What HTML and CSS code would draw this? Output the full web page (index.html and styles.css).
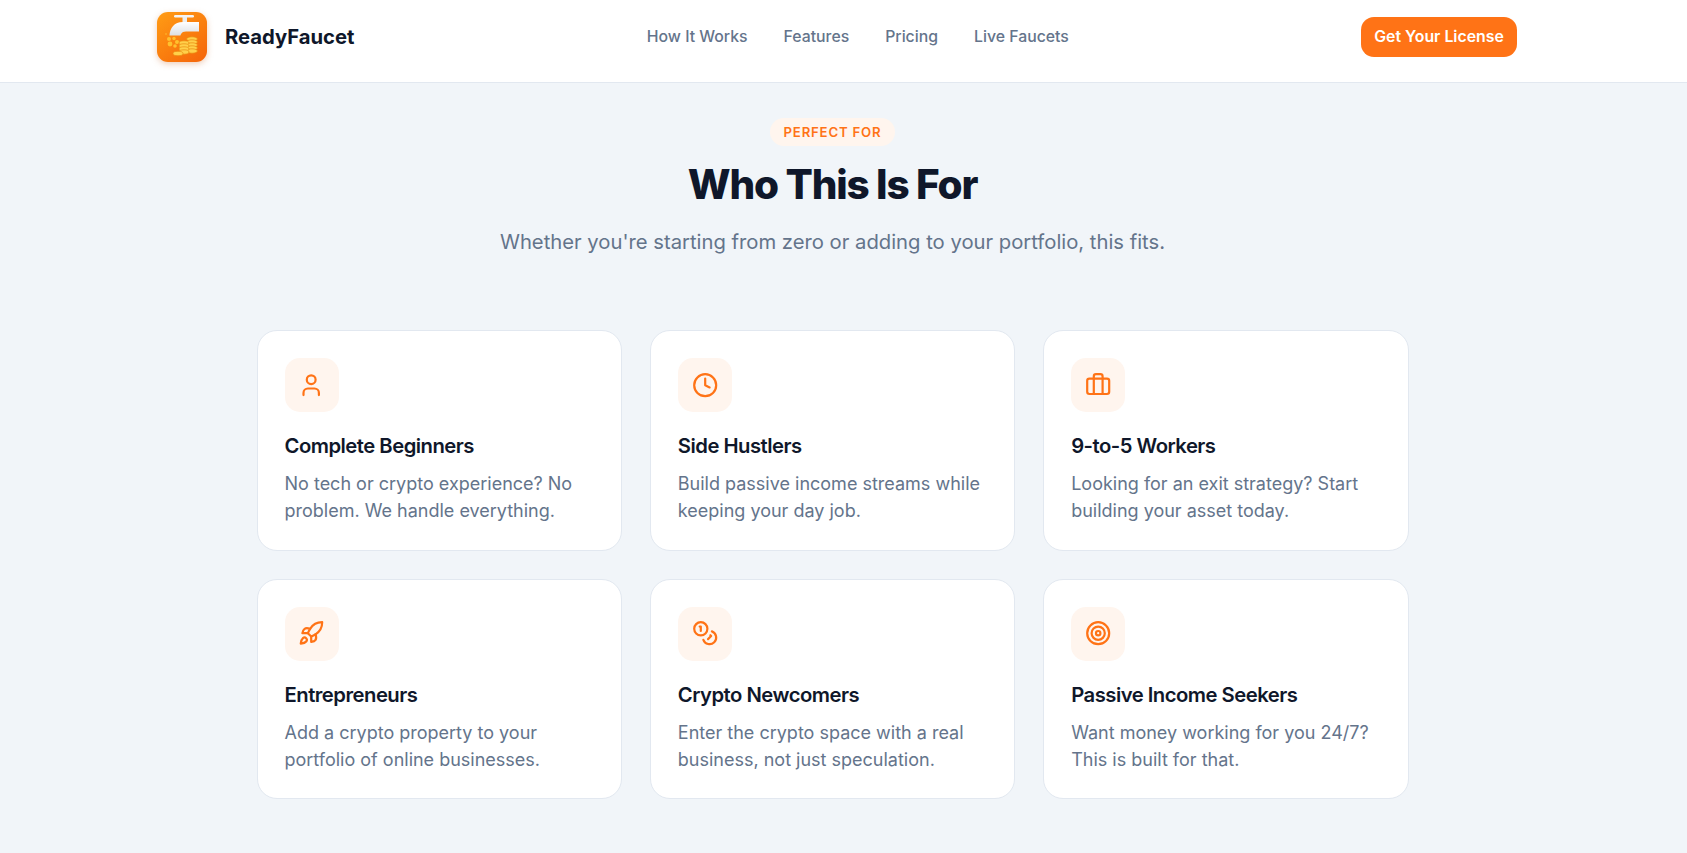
FILE: index.html
```html
<!DOCTYPE html>
<html lang="en">
<head>
<meta charset="utf-8">
<title>ReadyFaucet</title>
<link rel="stylesheet" href="styles.css">
</head>
<body>
<header class="nav">
  <div class="nav-inner">
    <a class="brand" href="#">
      <svg class="logo" viewBox="0 0 50 50" aria-hidden="true">
        <defs>
          <linearGradient id="lg" x1="0.1" y1="0" x2="0.9" y2="1"><stop offset="0" stop-color="#ff9a14"/><stop offset="1" stop-color="#f5660a"/></linearGradient>
          <linearGradient id="tap" x1="0" y1="0" x2="0" y2="1"><stop offset="0" stop-color="#ffffff"/><stop offset="1" stop-color="#dcdfe3"/></linearGradient>
        </defs>
        <rect width="50" height="50" rx="11" fill="url(#lg)"/>
        <rect x="17" y="3" width="20" height="2.600" rx="1.300" fill="#f4f4f4"/>
        <rect x="25.500" y="5" width="4.500" height="5" fill="#eceef0"/>
        <path d="M42 10v9.500H29c-2.500 0-4 .8-5 2.500l-.6 1.500H12.500C13 16 17 10 26 10z" fill="url(#tap)"/>
        <g fill="#ffc02e">
          <circle cx="12" cy="27" r="2"/><circle cx="17" cy="26.500" r="1.700"/><circle cx="20" cy="30" r="2"/><circle cx="13" cy="32" r="2.400"/><circle cx="18" cy="34" r="1.800"/><circle cx="9" cy="22" r=".8"/>
        </g>
        <g fill="#ffd04a" stroke="#e98a10" stroke-width=".7">
          <ellipse cx="35" cy="27" rx="5.500" ry="2.200"/><ellipse cx="35" cy="30" rx="5.500" ry="2.200"/><ellipse cx="35" cy="33" rx="5.500" ry="2.200"/><ellipse cx="35" cy="36" rx="5.500" ry="2.200"/><ellipse cx="35" cy="39" rx="5.500" ry="2.200"/>
          <ellipse cx="27" cy="31" rx="5" ry="2.200"/><ellipse cx="27" cy="34" rx="5" ry="2.200"/><ellipse cx="27" cy="37" rx="5" ry="2.200"/><ellipse cx="27" cy="40" rx="5" ry="2.200"/>
          <ellipse cx="21" cy="41.500" rx="5" ry="2.200"/>
        </g>
      </svg>
      <span class="brand-name">ReadyFaucet</span>
    </a>
    <nav class="links">
      <a href="#">How It Works</a>
      <a href="#">Features</a>
      <a href="#">Pricing</a>
      <a href="#">Live Faucets</a>
    </nav>
    <a class="cta" href="#">Get Your License</a>
  </div>
</header>
<main class="section">
  <div class="head">
    <span class="pill">PERFECT FOR</span>
    <h1>Who This Is For</h1>
    <p>Whether you're starting from zero or adding to your portfolio, this fits.</p>
  </div>
  <div class="grid">
    <article class="card">
      <div class="icon"><svg viewBox="0 0 24 24"><path d="M19 21v-2a4 4 0 0 0-4-4H9a4 4 0 0 0-4 4v2"/><circle cx="12" cy="7" r="4"/></svg></div>
      <h3>Complete Beginners</h3>
      <p>No tech or crypto experience? No problem. We handle everything.</p>
    </article>
    <article class="card">
      <div class="icon"><svg viewBox="0 0 24 24"><circle cx="12" cy="12" r="10"/><path d="M12 6v6l4 2"/></svg></div>
      <h3>Side Hustlers</h3>
      <p>Build passive income streams while keeping your day job.</p>
    </article>
    <article class="card">
      <div class="icon"><svg viewBox="0 0 24 24"><rect x="2" y="6" width="20" height="14" rx="2"/><path d="M16 20V4a2 2 0 0 0-2-2h-4a2 2 0 0 0-2 2v16"/></svg></div>
      <h3>9-to-5 Workers</h3>
      <p>Looking for an exit strategy? Start building your asset today.</p>
    </article>
    <article class="card">
      <div class="icon"><svg viewBox="0 0 24 24"><path d="M4.500 16.500c-1.500 1.260-2 5-2 5s3.740-.5 5-2c.71-.84.7-2.130-.09-2.910a2.180 2.180 0 0 0-2.910-.09z"/><path d="m12 15-3-3a22 22 0 0 1 2-3.950A12.880 12.880 0 0 1 22 2c0 2.720-.78 7.500-6 11a22.350 22.350 0 0 1-4 2z"/><path d="M9 12H4s.55-3.030 2-4c1.620-1.080 5 0 5 0"/><path d="M12 15v5s3.030-.55 4-2c1.080-1.620 0-5 0-5"/></svg></div>
      <h3>Entrepreneurs</h3>
      <p>Add a crypto property to your portfolio of online businesses.</p>
    </article>
    <article class="card">
      <div class="icon"><svg viewBox="0 0 24 24"><circle cx="8" cy="8" r="6"/><path d="M18.090 10.370A6 6 0 1 1 10.340 18"/><path d="M7 6h1v4"/><path d="m16.710 13.880.7.71-2.820 2.820"/></svg></div>
      <h3>Crypto Newcomers</h3>
      <p>Enter the crypto space with a real business, not just speculation.</p>
    </article>
    <article class="card">
      <div class="icon"><svg viewBox="0 0 24 24"><circle cx="12" cy="12" r="10"/><circle cx="12" cy="12" r="6"/><circle cx="12" cy="12" r="2"/></svg></div>
      <h3>Passive Income Seekers</h3>
      <p>Want money working for you 24/7? This is built for that.</p>
    </article>
  </div>
</main>
</body>
</html>
```
FILE: styles.css
```css
* { box-sizing: border-box; }
html, body { margin: 0; padding: 0; }
body {
  background: #f1f5f9;
  color: #0f172a;
  font-family: Inter, "Liberation Sans", sans-serif;
  height: 853px;
  overflow: hidden;
}
a { text-decoration: none; color: inherit; }
.nav {
  height: 83px;
  background: #fff;
  border-bottom: 1px solid #e2e8f0;
  padding-bottom: 9px;
}
.nav-inner {
  width: 1360px;
  margin-left: 157px;
  height: 100%;
  display: flex;
  align-items: center;
  justify-content: space-between;
}
.brand { display: flex; align-items: center; gap: 18px; }
.logo { width: 50px; height: 50px; display: block; filter: drop-shadow(0 2px 3px rgba(200,90,20,.3)); }
.brand-name { font-size: 20.240px; font-weight: 700; color: #0f172a; }
.links { display: flex; gap: 36px; font-size: 15.800px; font-weight: 500; color: #64748b; }
.cta {
  background: #ff7316;
  color: #fff;
  font-size: 15.840px;
  font-weight: 600;
  padding: 0 13.200px;
  height: 40px;
  border-radius: 13px;
  display: flex;
  align-items: center;
}
.section { width: 1665px; padding-top: 35px; }
.head { text-align: center; }
.pill {
  display: inline-block;
  background: #fff5ee;
  color: #ff7316;
  font-size: 13.200px;
  font-weight: 600;
  letter-spacing: .8px;
  padding: 7px 14px 6px;
  border-radius: 999px;
  line-height: 15px;
}
.head h1 {
  margin: 14px 0 0;
  font-size: 40.480px;
  line-height: 50px;
  font-weight: 800;
  letter-spacing: -1.200px;
}
.head p {
  margin: 17px 0 0;
  font-size: 20.240px;
  line-height: 30px;
  color: #64748b;
}
.grid {
  width: 1152px;
  margin: 73px auto 0;
  display: grid;
  grid-template-columns: repeat(3, 1fr);
  gap: 28px;
}
.card {
  background: #fff;
  border: 1px solid #e2e8f0;
  border-radius: 20px;
  padding: 27px 27px 25px;
}
.icon {
  width: 54px;
  height: 54px;
  background: #fff5ee;
  border-radius: 15px;
  display: flex;
  align-items: center;
  justify-content: center;
}
.icon svg {
  width: 26.400px;
  height: 26.400px;
  fill: none;
  stroke: #ff7316;
  stroke-width: 2;
  stroke-linecap: round;
  stroke-linejoin: round;
}
.card h3 {
  margin: 19px 0 0;
  font-size: 20.240px;
  line-height: 30px;
  font-weight: 600;
  letter-spacing: -0.5px;
}
.card p {
  margin: 9px 0 0;
  font-size: 18px;
  line-height: 27.300px;
  color: #64748b;
}
```
